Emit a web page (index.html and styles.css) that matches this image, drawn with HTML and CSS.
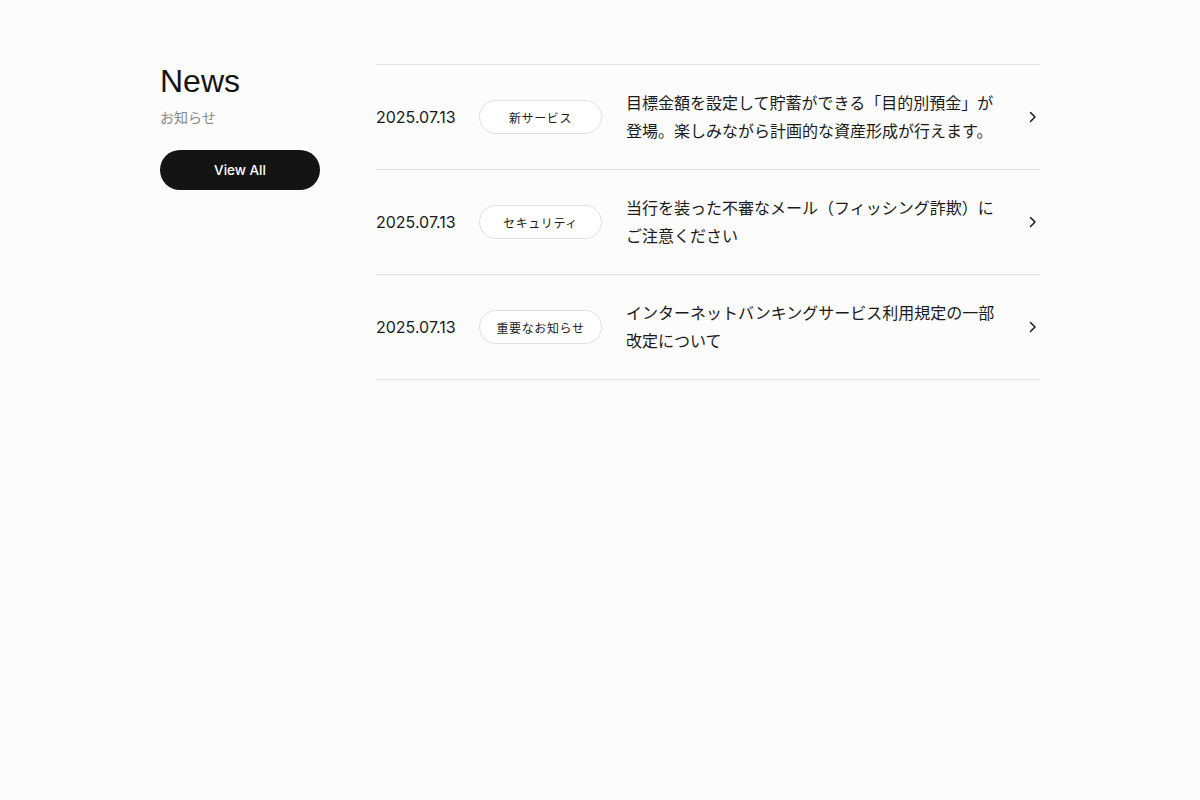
FILE: index.html
```html
<!DOCTYPE html>
<html lang="ja">
<head>
<meta charset="utf-8">
<title>News</title>
<link rel="stylesheet" href="styles.css">
</head>
<body>
<section class="news">
  <div class="news-head">
    <h2 class="news-title">News</h2>
    <p class="news-sub">お知らせ</p>
    <a class="btn" href="#">View All</a>
  </div>
  <ul class="news-list">
    <li class="item">
      <span class="date">2025.07.13</span>
      <span class="tag">新サービス</span>
      <p class="text">目標金額を設定して貯蓄ができる「目的別預金」が登場。楽しみながら計画的な資産形成が行えます。</p>
      <svg class="chev" viewBox="0 0 16 16" width="16" height="16"><path d="M6.5 3.5 11 8 6.5 12.5" fill="none" stroke="#1a1a1a" stroke-width="1.5" stroke-linecap="round" stroke-linejoin="round"/></svg>
    </li>
    <li class="item">
      <span class="date">2025.07.13</span>
      <span class="tag">セキュリティ</span>
      <p class="text">当行を装った不審なメール（フィッシング詐欺）にご注意ください</p>
      <svg class="chev" viewBox="0 0 16 16" width="16" height="16"><path d="M6.5 3.5 11 8 6.5 12.5" fill="none" stroke="#1a1a1a" stroke-width="1.5" stroke-linecap="round" stroke-linejoin="round"/></svg>
    </li>
    <li class="item">
      <span class="date">2025.07.13</span>
      <span class="tag">重要なお知らせ</span>
      <p class="text">インターネットバンキングサービス利用規定の一部改定について</p>
      <svg class="chev" viewBox="0 0 16 16" width="16" height="16"><path d="M6.5 3.5 11 8 6.5 12.5" fill="none" stroke="#1a1a1a" stroke-width="1.5" stroke-linecap="round" stroke-linejoin="round"/></svg>
    </li>
  </ul>
</section>
</body>
</html>
```

FILE: styles.css
```css
* { box-sizing: border-box; }
html, body { margin: 0; padding: 0; }
body {
  background: #fcfcfc;
  color: #1a1a1a;
  font-family: Inter, "Noto Sans CJK JP", sans-serif;
  width: 1200px;
  height: 800px;
}
.news {
  display: flex;
  gap: 56px;
  width: 880px;
  margin: 0 auto;
  padding-top: 64px;
}
.news-head {
  width: 160px;
  flex-shrink: 0;
  display: flex;
  flex-direction: column;
}
.news-title {
  margin: 0;
  font-family: "Liberation Sans", Arial, sans-serif;
  font-size: 32px;
  font-weight: 400;
  line-height: 34px;
  color: #141414;
}
.news-sub {
  margin: 10px 0 0;
  font-size: 14px;
  line-height: 20px;
  color: #888;
}
.btn {
  margin-top: 22px;
  display: flex;
  align-items: center;
  justify-content: center;
  height: 40px;
  width: 160px;
  border-radius: 20px;
  background: #141414;
  color: #fff;
  font-size: 13.5px;
  font-weight: 500;
  text-decoration: none;
}
.news-list {
  list-style: none;
  margin: 0;
  padding: 0;
  flex: 1;
  border-top: 1px solid #e2e2e2;
}
.item {
  display: flex;
  align-items: center;
  gap: 24px;
  padding: 24px 0;
  border-bottom: 1px solid #e2e2e2;
}
.date {
  width: 79px;
  flex-shrink: 0;
  font-size: 16px;
  line-height: 24px;
  white-space: nowrap;
}
.tag {
  width: 123px;
  height: 34px;
  flex-shrink: 0;
  display: flex;
  align-items: center;
  justify-content: center;
  border: 1px solid #e0e0e0;
  border-radius: 17px;
  background: #fff;
  font-size: 12px;
  letter-spacing: 0.05em;
  color: #1a1a1a;
}
.text {
  flex: 1;
  margin: 0;
  font-size: 16px;
  line-height: 28px;
  font-weight: 400;
}
.chev { flex-shrink: 0; }
```
